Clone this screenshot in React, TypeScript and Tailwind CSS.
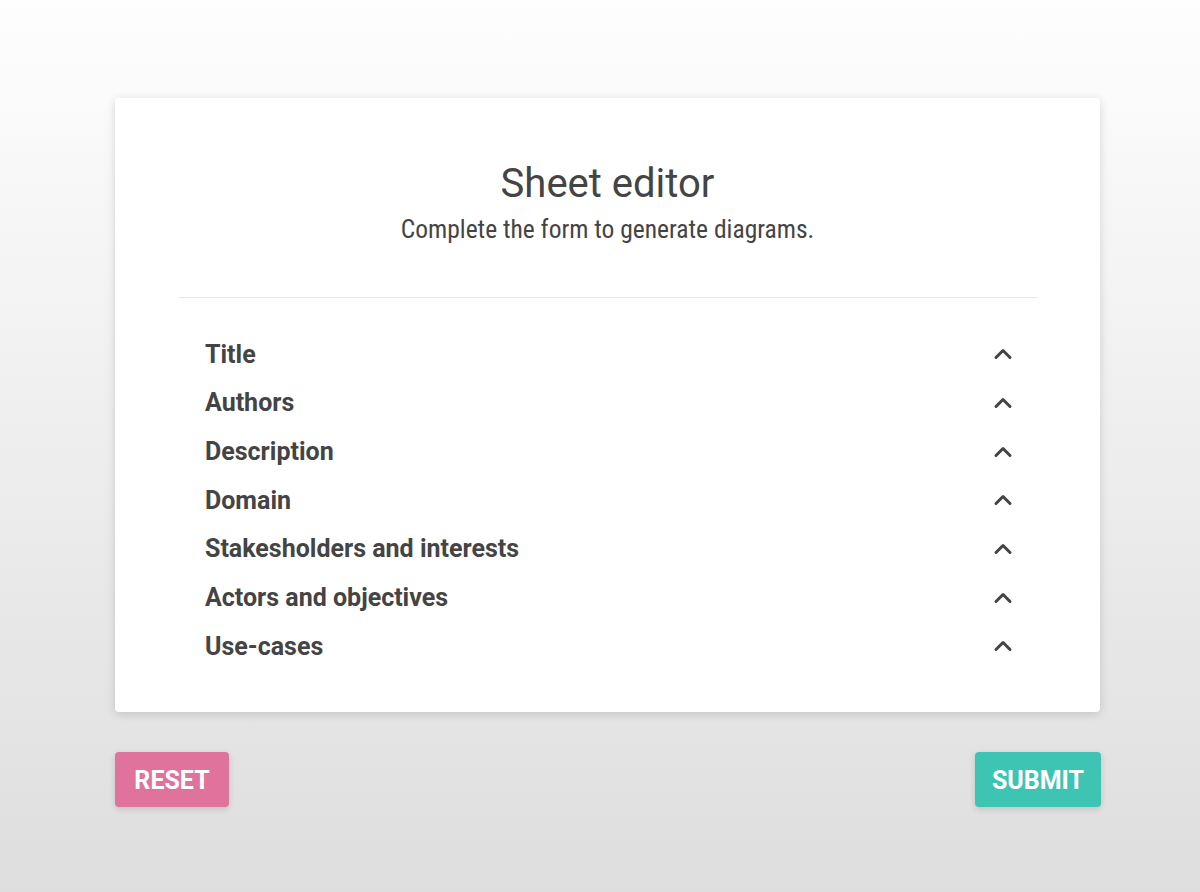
import { ChevronUp } from "lucide-react";

const sections = [
  "Title",
  "Authors",
  "Description",
  "Domain",
  "Stakesholders and interests",
  "Actors and objectives",
  "Use-cases",
];

export default function App() {
  return (
    <div
      className="min-h-[892px] w-full bg-gradient-to-b from-[#fefefe] to-[#dedede] pt-[98px] text-[#444]"
      style={{ fontFamily: "Roboto, 'Liberation Sans', sans-serif" }}
    >
      <div className="ml-[115px] w-[985px]">
        {/* Card */}
        <div className="h-[614px] rounded bg-white px-[63px] pt-[60px] shadow-[0_2px_10px_rgba(0,0,0,0.15)]">
          <div className="text-center">
            <h1 className="text-[40px] font-normal leading-[52px] text-[#444]">Sheet editor</h1>
            <p className="mt-[2px] text-[25.5px] leading-[34px] text-[#444] [font-stretch:condensed]">
              Complete the form to generate diagrams.
            </p>
          </div>
          <div className="mt-[51px] border-t border-[#e6e6e6]" />
          <ul className="mt-[32px] px-[27px]">
            {sections.map((s) => (
              <li key={s} className="flex h-[48.7px] items-center justify-between">
                <span className="text-[25px] font-bold">{s}</span>
                <ChevronUp className="-mr-[7px] h-7 w-7" strokeWidth={2.6} />
              </li>
            ))}
          </ul>
        </div>

        {/* Buttons */}
        <div className="mt-[40px] flex justify-between">
          <button className="h-[55px] w-[114px] rounded-sm bg-[#e0739c] pt-[2px] text-[25px] font-bold text-white shadow-[0_2px_6px_rgba(0,0,0,0.15)]">
            RESET
          </button>
          <button className="-mr-px h-[55px] w-[126px] rounded-sm bg-[#3ec4b3] pt-[2px] text-[25px] font-bold text-white shadow-[0_2px_6px_rgba(0,0,0,0.15)]">
            SUBMIT
          </button>
        </div>
      </div>
    </div>
  );
}
